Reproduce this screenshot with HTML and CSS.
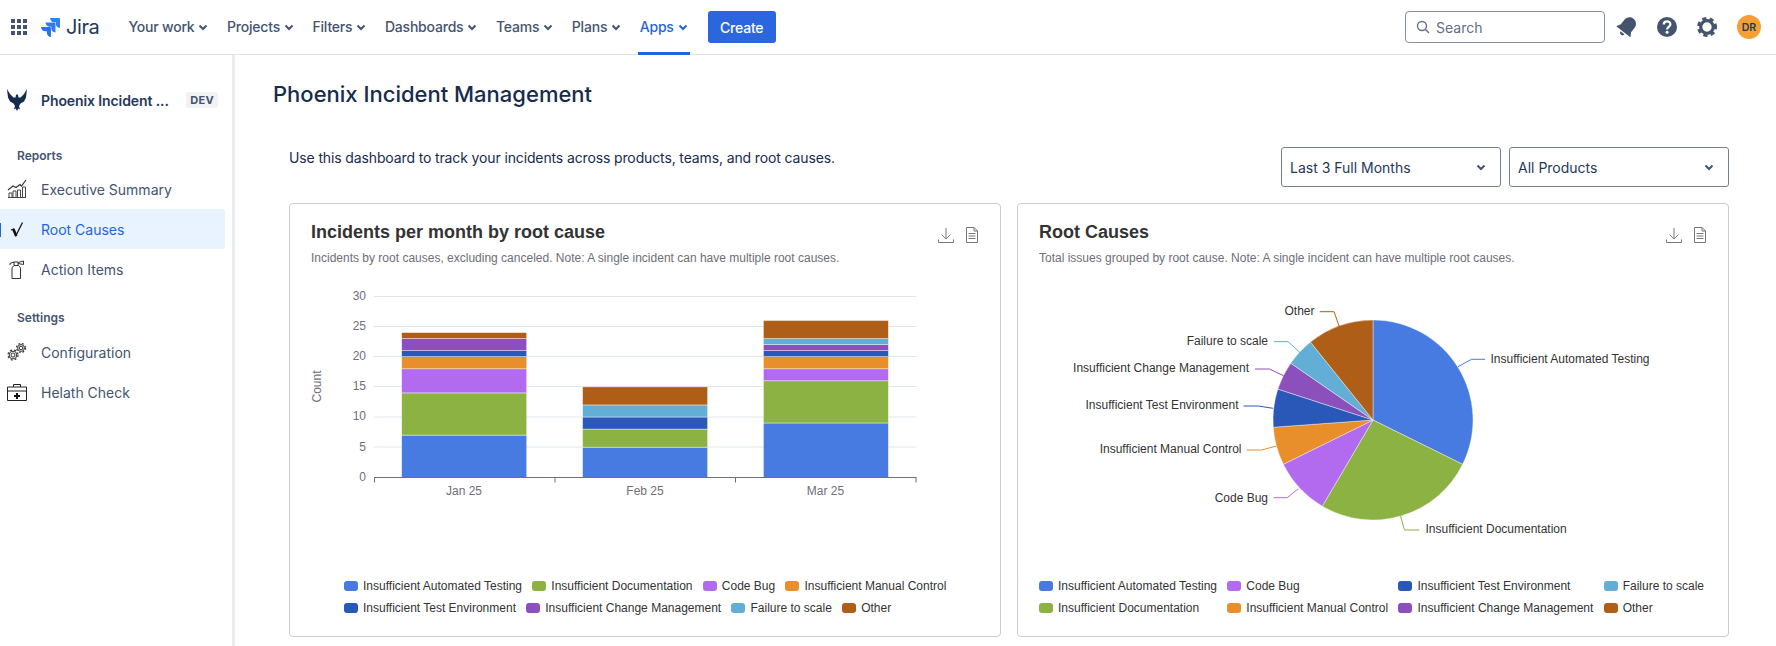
FILE: index.html
```html
<!DOCTYPE html>
<html lang="en">
<head>
<meta charset="utf-8">
<title>Phoenix Incident Management</title>
<link rel="stylesheet" href="styles.css">
</head>
<body>
<svg class="sprite" aria-hidden="true">
  <symbol id="chev" viewBox="0 0 10 10"><path d="M1.5 3.5 5 7l3.5-3.5" fill="none" stroke="currentColor" stroke-width="2"/></symbol>
  <symbol id="download" viewBox="0 0 16 16"><path d="M8 1v10.5M3.5 7.5 8 12l4.500-4.500M.5 12.500v3h15v-3" fill="none" stroke="#777" stroke-width="1"/></symbol>
  <symbol id="doc" viewBox="0 0 12 16"><path d="M.5.500h7.500l3.500 3.500v11.500h-11zM8 .5V4h3.500M2.500 6.500h7M2.500 9h7M2.500 11.500h7" fill="none" stroke="#777" stroke-width="1"/></symbol>
</svg>

<header class="topbar">
  <svg class="apps" viewBox="0 0 16 16"><path d="M0 0h4v4H0zM6 0h4v4H6zM12 0h4v4h-4zM0 6h4v4H0zM6 6h4v4H6zM12 6h4v4h-4zM0 12h4v4H0zM6 12h4v4H6zM12 12h4v4h-4z" fill="#44546F"/></svg>
  <div class="logo">
    <svg class="logo-mark" viewBox="0 0 24 24"><path fill="#2684FF" d="M23.013 0H11.455a5.215 5.215 0 0 0 5.215 5.215h2.129v2.057A5.215 5.215 0 0 0 24 12.483V1.005A1.001 1.001 0 0 0 23.013 0Z"/><path fill="#2F7CEE" d="M17.294 5.757H5.736a5.215 5.215 0 0 0 5.215 5.214h2.129v2.058a5.218 5.218 0 0 0 5.215 5.214V6.758a1.001 1.001 0 0 0-1.001-1.001z"/><path fill="#2A74E6" d="M11.571 11.513H0a5.218 5.218 0 0 0 5.232 5.215h2.13v2.057A5.215 5.215 0 0 0 12.575 24V12.518a1.005 1.005 0 0 0-1.005-1.005z"/></svg>
    <span class="logo-text">Jira</span>
  </div>
  <nav class="topnav">
    <a class="topnav-link">Your work<svg class="chev"><use href="#chev"/></svg></a>
    <a class="topnav-link">Projects<svg class="chev"><use href="#chev"/></svg></a>
    <a class="topnav-link">Filters<svg class="chev"><use href="#chev"/></svg></a>
    <a class="topnav-link">Dashboards<svg class="chev"><use href="#chev"/></svg></a>
    <a class="topnav-link">Teams<svg class="chev"><use href="#chev"/></svg></a>
    <a class="topnav-link">Plans<svg class="chev"><use href="#chev"/></svg></a>
    <a class="topnav-link is-active">Apps<svg class="chev"><use href="#chev"/></svg></a>
  </nav>
  <button class="create">Create</button>
  <div class="topbar-right">
    <div class="search">
      <svg class="search-icon" viewBox="0 0 14 14"><circle cx="6" cy="6" r="4.500" fill="none" stroke="#626F86" stroke-width="1.400"/><path d="m9.500 9.500 3.500 3.500" stroke="#626F86" stroke-width="1.400"/></svg>
      <span>Search</span>
    </div>
    <svg class="tool bell" viewBox="0 0 24 24"><g transform="rotate(38 12 12)" fill="#44546F"><path d="M12 1.500c-3.900 0-6.500 2.900-6.500 6.700v5.500L3 18h18l-2.500-4.300V8.200c0-3.800-2.600-6.700-6.500-6.700z"/><path d="M9.500 19.300h5a2.500 2.500 0 0 1-5 0z"/></g></svg>
    <svg class="tool" viewBox="0 0 24 24"><circle cx="12" cy="12" r="10" fill="#44546F"/><path d="M8.800 9.500c0-4.300 6.600-4.200 6.600-.2 0 2.600-3.300 2.500-3.300 5.100" fill="none" stroke="#fff" stroke-width="2.300"/><circle cx="12.100" cy="17.300" r="1.500" fill="#fff"/></svg>
    <svg class="tool" viewBox="0 0 24 24"><circle cx="12" cy="12" r="6.300" fill="none" stroke="#44546F" stroke-width="3.200"/><circle cx="12" cy="12" r="8.600" fill="none" stroke="#44546F" stroke-width="2.800" stroke-dasharray="4.200 3.300" stroke-dashoffset="2.100"/></svg>
    <div class="avatar">DR</div>
  </div>
</header>

<div class="layout">
  <aside class="sidebar">
    <div class="brand">
      <svg class="side-icon" viewBox="0 0 20 22"><path d="M10 22 8.600 19.500 7 20.500l1-3.500-1.500-2.500L3 12.500 1 8.500 0 0l3 5 3.500 3.500h2l.4-2.200L10 5l1.100 1.300.4 2.200h2L17 5l3-5-1 8.500-2 4-3.500 2L12 17l1 3.500-1.600-1z" fill="#172B4D"/></svg>
      <span class="brand-name">Phoenix Incident ...</span>
      <span class="badge">DEV</span>
    </div>
    <div class="side-label side-label-first">Reports</div>
    <a class="side-item">
      <svg class="side-icon" viewBox="0 0 20 20"><path d="M1 18.500h18M2 18v-4h3v4M6 18v-6h3v6M10.500 18V11h3v7M15.500 18V8h3v10" fill="none" stroke="#444" stroke-width="1"/><path d="M1 11l5-4 3 1.500 4-3 1.500 1.500L19 1" fill="none" stroke="#333" stroke-width="1.200"/></svg>
      Executive Summary
    </a>
    <a class="side-item is-active">
      <svg class="side-icon" viewBox="0 0 20 20"><path d="M4 11l2.500-1 2.500 6.500L15.500 3.500" fill="none" stroke="#111" stroke-width="1.300"/><path d="M6.300 10l2.900 7" stroke="#111" stroke-width="2.600"/></svg>
      Root Causes
    </a>
    <a class="side-item">
      <svg class="side-icon" viewBox="0 0 20 20"><path d="M5 19.500h8.500V10c0-2-1.500-3-2-3.500h-4.500C6.500 7 5 8 5 10z" fill="none" stroke="#333" stroke-width="1"/><path d="M7 6.500V3h4v3.500M7 3 3 4.500M11 3.500l5.500-1.500v3.500L11 4.500M3 4.500V6" fill="none" stroke="#333" stroke-width="1"/></svg>
      Action Items
    </a>
    <div class="side-label">Settings</div>
    <a class="side-item">
      <svg class="side-icon" viewBox="0 0 20 20"><g fill="none" stroke="#333"><circle cx="6" cy="13" r="2" stroke-width="1"/><circle cx="6" cy="13" r="3.800" stroke-width="1"/><circle cx="6" cy="13" r="5" stroke-width="1.200" stroke-dasharray="2 2"/><circle cx="14" cy="6" r="1.800" stroke-width="1"/><circle cx="14" cy="6" r="3.400" stroke-width="1"/><circle cx="14" cy="6" r="4.500" stroke-width="1.200" stroke-dasharray="1.800 1.800"/></g></svg>
      Configuration
    </a>
    <a class="side-item">
      <svg class="side-icon" viewBox="0 0 20 20"><path d="M.5 5h19v13.500H.5zM.5 9h19M6.500 5V2.500h7V5" fill="none" stroke="#222" stroke-width="1"/><path d="M9 11h2v2h2v2h-2v2H9v-2H7v-2h2z" fill="#111"/></svg>
      Helath Check
    </a>
  </aside>

  <main class="main">
    <h1 class="title">Phoenix Incident Management</h1>
    <div class="content">
      <div class="toolbar">
        <p class="intro">Use this dashboard to track your incidents across products, teams, and root causes.</p>
        <div class="filters">
          <div class="select">Last 3 Full Months<svg class="select-chev"><use href="#chev"/></svg></div>
          <div class="select">All Products<svg class="select-chev"><use href="#chev"/></svg></div>
        </div>
      </div>

      <div class="cards">
        <section class="card">
          <div class="card-head">
            <div>
              <h2 class="card-title">Incidents per month by root cause</h2>
              <p class="card-sub">Incidents by root causes, excluding canceled. Note: A single incident can have multiple root causes.</p>
            </div>
            <div class="card-tools">
              <svg class="tool-dl"><use href="#download"/></svg>
              <svg class="tool-doc"><use href="#doc"/></svg>
            </div>
          </div>
          <svg class="chart" viewBox="290 266 710 300">
            <g class="grid">
              <path d="M374 296.500h542.500M374 326.500h542.500M374 356.500h542.500M374 386.500h542.500M374 417h542.500M374 447h542.500"/>
            </g>
            <g class="axis-text">
              <text x="366" y="299.500" text-anchor="end">30</text>
              <text x="366" y="329.500" text-anchor="end">25</text>
              <text x="366" y="360" text-anchor="end">20</text>
              <text x="366" y="390" text-anchor="end">15</text>
              <text x="366" y="420" text-anchor="end">10</text>
              <text x="366" y="450.500" text-anchor="end">5</text>
              <text x="366" y="481" text-anchor="end">0</text>
              <text x="464" y="495" text-anchor="middle">Jan 25</text>
              <text x="645" y="495" text-anchor="middle">Feb 25</text>
              <text x="825.500" y="495" text-anchor="middle">Mar 25</text>
              <text x="0" y="0" text-anchor="middle" transform="translate(321 386.500) rotate(-90)">Count</text>
            </g>
            <g class="seg">
              <rect class="c1" x="401.700" y="435.100" width="125" height="42.200"/>
              <rect class="c2" x="401.700" y="392.900" width="125" height="42.200"/>
              <rect class="c3" x="401.700" y="368.800" width="125" height="24.100"/>
              <rect class="c4" x="401.700" y="356.700" width="125" height="12.100"/>
              <rect class="c5" x="401.700" y="350.700" width="125" height="6"/>
              <rect class="c6" x="401.700" y="338.600" width="125" height="12.100"/>
              <rect class="c8" x="401.700" y="332.600" width="125" height="6"/>

              <rect class="c1" x="582.600" y="447.150" width="125" height="30.150"/>
              <rect class="c2" x="582.600" y="429.060" width="125" height="18.090"/>
              <rect class="c5" x="582.600" y="417" width="125" height="12.060"/>
              <rect class="c7" x="582.600" y="404.940" width="125" height="12.060"/>
              <rect class="c8" x="582.600" y="386.850" width="125" height="18.090"/>

              <rect class="c1" x="763.400" y="423" width="125" height="54.300"/>
              <rect class="c2" x="763.400" y="380.800" width="125" height="42.200"/>
              <rect class="c3" x="763.400" y="368.800" width="125" height="12"/>
              <rect class="c4" x="763.400" y="356.700" width="125" height="12.100"/>
              <rect class="c5" x="763.400" y="350.700" width="125" height="6"/>
              <rect class="c6" x="763.400" y="344.700" width="125" height="6"/>
              <rect class="c7" x="763.400" y="338.600" width="125" height="6.100"/>
              <rect class="c8" x="763.400" y="320.500" width="125" height="18.100"/>
            </g>
            <path class="axis-line" d="M374 477.500h542.500M374.500 477.500v5M555 477.500v5M735.500 477.500v5M916 477.500v5"/>
          </svg>
          <div class="legend legend-flow">
            <span class="legend-item"><i class="swatch b1"></i>Insufficient Automated Testing</span>
            <span class="legend-item"><i class="swatch b2"></i>Insufficient Documentation</span>
            <span class="legend-item"><i class="swatch b3"></i>Code Bug</span>
            <span class="legend-item"><i class="swatch b4"></i>Insufficient Manual Control</span>
            <span class="legend-item"><i class="swatch b5"></i>Insufficient Test Environment</span>
            <span class="legend-item"><i class="swatch b6"></i>Insufficient Change Management</span>
            <span class="legend-item"><i class="swatch b7"></i>Failure to scale</span>
            <span class="legend-item"><i class="swatch b8"></i>Other</span>
          </div>
        </section>

        <section class="card">
          <div class="card-head">
            <div>
              <h2 class="card-title">Root Causes</h2>
              <p class="card-sub">Total issues grouped by root cause. Note: A single incident can have multiple root causes.</p>
            </div>
            <div class="card-tools">
              <svg class="tool-dl"><use href="#download"/></svg>
              <svg class="tool-doc"><use href="#doc"/></svg>
            </div>
          </div>
          <svg class="chart" viewBox="1019 266 709 300">
            <g class="pie" transform="translate(1373.500 420)">
              <path class="c1" d="M0 0V-100A100 100 0 0 1 89.640 44.320Z"/>
              <path class="c2" d="M0 0L89.640 44.320A100 100 0 0 1 -50.690 86.200Z"/>
              <path class="c3" d="M0 0L-50.690 86.200A100 100 0 0 1 -89.640 44.320Z"/>
              <path class="c4" d="M0 0L-89.640 44.320A100 100 0 0 1 -99.740 7.240Z"/>
              <path class="c5" d="M0 0L-99.740 7.240A100 100 0 0 1 -95.110 -30.900Z"/>
              <path class="c6" d="M0 0L-95.110 -30.900A100 100 0 0 1 -82.300 -56.810Z"/>
              <path class="c7" d="M0 0L-82.300 -56.810A100 100 0 0 1 -62.600 -77.980Z"/>
              <path class="c8" d="M0 0L-62.600 -77.980A100 100 0 0 1 0 -100Z"/>
            </g>
            <g class="leaders">
              <path class="l1" d="M1458.500 366.700 1472 359.300H1485.600"/>
              <path class="l2" d="M1401 516 1405 530H1420"/>
              <path class="l3" d="M1298.700 488.700 1287.700 497.700H1274"/>
              <path class="l4" d="M1277 446 1262 450H1247"/>
              <path class="l5" d="M1273.400 408.300 1258.800 406H1244"/>
              <path class="l6" d="M1284 375.700 1270 369H1255.500"/>
              <path class="l7" d="M1300.500 352.700 1288.600 341.700H1274.400"/>
              <path class="l8" d="M1339.600 326 1334.500 311.700H1320.300"/>
            </g>
            <g class="pie-text">
              <text x="1491" y="363">Insufficient Automated Testing</text>
              <text x="1426" y="533">Insufficient Documentation</text>
              <text x="1268.500" y="502" text-anchor="end">Code Bug</text>
              <text x="1242" y="453" text-anchor="end">Insufficient Manual Control</text>
              <text x="1239" y="409" text-anchor="end">Insufficient Test Environment</text>
              <text x="1249.500" y="372" text-anchor="end">Insufficient Change Management</text>
              <text x="1268.500" y="345" text-anchor="end">Failure to scale</text>
              <text x="1315" y="315" text-anchor="end">Other</text>
            </g>
          </svg>
          <div class="legend legend-grid">
            <span class="legend-item"><i class="swatch b1"></i>Insufficient Automated Testing</span>
            <span class="legend-item"><i class="swatch b3"></i>Code Bug</span>
            <span class="legend-item"><i class="swatch b5"></i>Insufficient Test Environment</span>
            <span class="legend-item"><i class="swatch b7"></i>Failure to scale</span>
            <span class="legend-item"><i class="swatch b2"></i>Insufficient Documentation</span>
            <span class="legend-item"><i class="swatch b4"></i>Insufficient Manual Control</span>
            <span class="legend-item"><i class="swatch b6"></i>Insufficient Change Management</span>
            <span class="legend-item"><i class="swatch b8"></i>Other</span>
          </div>
        </section>
      </div>
    </div>
  </main>
</div>
</body>
</html>
```

FILE: styles.css
```css
* { box-sizing: border-box; }

html, body { height: 100%; }

body {
  margin: 0;
  background: #fff;
  color: #172B4D;
  font-family: Inter, "Noto Sans", "Liberation Sans", sans-serif;
  font-size: 14px;
  overflow: hidden;
}

.sprite { display: none; }

/* Top bar */
.topbar {
  display: flex;
  align-items: center;
  height: 55px;
  padding: 0 15px 0 11px;
  border-bottom: 1px solid #E2E3E6;
}

.apps { width: 16px; height: 16px; flex: none; }

.logo {
  display: flex;
  align-items: center;
  gap: 6px;
  margin-left: 14px;
}

.logo-mark { width: 19px; height: 19px; }

.logo-text {
  font-size: 20px;
  font-weight: 400;
  color: #253858;
  letter-spacing: -0.4px;
}

.topnav {
  display: flex;
  align-self: stretch;
  gap: 14.500px;
  margin-left: 27px;
}

.topnav-link {
  display: flex;
  align-items: center;
  gap: 4px;
  padding: 1px 2px 0;
  color: #44546F;
  font-weight: 500;
  font-size: 14px;
  letter-spacing: -0.2px;
  border-bottom: 3px solid transparent;
  margin-bottom: -1px;
}

.topnav-link.is-active {
  color: #1F64E0;
  border-bottom-color: #1F64E0;
}

.chev { width: 10px; height: 10px; }

.create {
  height: 32px;
  width: 68px;
  margin-left: 18px;
  border: 0;
  border-radius: 3px;
  background: #2C66DE;
  color: #fff;
  font: 500 14px Inter, sans-serif;
  letter-spacing: -0.2px;
}

.topbar-right {
  display: flex;
  align-items: center;
  gap: 16px;
  margin-left: auto;
}

.search {
  display: flex;
  align-items: center;
  gap: 6px;
  width: 200px;
  height: 32px;
  margin-right: -6px;
  padding-left: 10px;
  border: 1px solid #8590A2;
  border-radius: 4px;
  color: #626F86;
  font-size: 14px;
}

.search-icon { width: 14px; height: 14px; }

.tool { width: 24px; height: 24px; flex: none; }

.avatar {
  display: flex;
  align-items: center;
  justify-content: center;
  width: 24px;
  height: 24px;
  margin-left: 2px;
  border-radius: 50%;
  background: #F5A034;
  color: #253858;
  font-size: 10.500px;
  font-weight: 600;
}

/* Frame */
.layout {
  display: flex;
  height: calc(100vh - 55px);
}

.sidebar {
  flex: none;
  width: 235px;
  padding-right: 7px;
  border-right: 3px solid #EBECF0;
}

.brand {
  display: flex;
  align-items: center;
  height: 32px;
  margin-top: 29px;
  padding-left: 7px;
}

.side-icon { width: 20px; height: 20px; flex: none; }

.brand .side-icon { height: 22px; }

.brand-name {
  margin-left: 14px;
  font-weight: 600;
  font-size: 14px;
  letter-spacing: -0.1px;
  color: #253858;
  white-space: nowrap;
}

.badge {
  margin-left: auto;
  margin-right: 7px;
  padding: 0 4px;
  height: 16px;
  line-height: 16px;
  border-radius: 3px;
  background: #F1F2F4;
  color: #44546F;
  font-size: 11px;
  font-weight: 700;
  letter-spacing: 0.3px;
}

.side-label {
  height: 16px;
  line-height: 16px;
  margin: 21px 0 6px 17px;
  color: #44546F;
  font-size: 12px;
  font-weight: 600;
}

.side-label-first { margin-top: 32px; margin-bottom: 5px; }

.side-item {
  display: flex;
  align-items: center;
  gap: 14px;
  height: 40px;
  padding-left: 7px;
  color: #44546F;
  font-size: 14px;
  border-radius: 0 3px 3px 0;
}

.side-item.is-active {
  position: relative;
  background: #E9F2FF;
  color: #1F64E0;
}

.side-item.is-active::before {
  content: "";
  position: absolute;
  left: 0;
  top: 14px;
  width: 1px;
  height: 14px;
  background: #1F64E0;
}

/* Main */
.main {
  flex: 1;
  min-width: 0;
  padding: 0 47px 0 38px;
}

.title {
  margin: 25px 0 0;
  font-size: 22px;
  line-height: 28px;
  font-weight: 500;
  color: #172B4D;
}

.content { padding-left: 16px; }

.toolbar {
  display: flex;
  justify-content: space-between;
  height: 40px;
  margin-top: 39px;
  margin-bottom: 16px;
}

.intro {
  margin: 0;
  font-size: 14px;
  line-height: 21px;
  letter-spacing: -0.130px;
  color: #172B4D;
}

.filters { display: flex; gap: 8px; }

.select {
  display: flex;
  align-items: center;
  justify-content: space-between;
  width: 220px;
  height: 40px;
  padding: 0 14px 0 8px;
  border: 1px solid #758195;
  border-radius: 3px;
  color: #253858;
  font-size: 14px;
}

.select-chev { width: 10px; height: 10px; color: #44546F; }

.cards {
  display: grid;
  grid-template-columns: 1fr 1fr;
  gap: 16px;
}

.card {
  height: 434px;
  border: 1px solid #CCCCCC;
  border-radius: 4px;
}

.card-head {
  display: flex;
  justify-content: space-between;
  padding: 17px 22px 0 21px;
}

.card-title {
  margin: 0;
  font: 700 18px/22px "Liberation Sans", Arial, sans-serif;
  color: #333333;
}

.card-sub {
  margin: 7px 0 0;
  font: 400 12px/16px "Liberation Sans", Arial, sans-serif;
  color: #6E6E76;
}

.card-tools {
  display: flex;
  gap: 12px;
  padding-top: 6px;
}

.tool-dl { width: 16px; height: 16px; }

.tool-doc { width: 12px; height: 16px; }

.chart {
  display: block;
  width: 100%;
  height: 300px;
}

.chart text {
  font: 12px "Liberation Sans", Arial, sans-serif;
}

.grid path { fill: none; stroke: #E0E6F1; stroke-width: 1; }

.axis-line { fill: none; stroke: #6E7079; stroke-width: 1; }

.axis-text { fill: #6E7079; }

.seg rect { stroke: #fff; stroke-width: 0.600; stroke-opacity: 0.700; }

.pie path { stroke: #fff; stroke-width: 0.400; }

.pie-text { fill: #333; }

.leaders path { fill: none; stroke-width: 1; }

.c1 { fill: #477BE2; }
.c2 { fill: #8DB244; }
.c3 { fill: #B26AEE; }
.c4 { fill: #E88F2B; }
.c5 { fill: #2A58B8; }
.c6 { fill: #8B50BC; }
.c7 { fill: #62AED6; }
.c8 { fill: #AF5E18; }

.l1 { stroke: #477BE2; }
.l2 { stroke: #8DB244; }
.l3 { stroke: #B26AEE; }
.l4 { stroke: #E88F2B; }
.l5 { stroke: #2A58B8; }
.l6 { stroke: #8B50BC; }
.l7 { stroke: #62AED6; }
.l8 { stroke: #AF5E18; }

.b1 { background: #477BE2; }
.b2 { background: #8DB244; }
.b3 { background: #B26AEE; }
.b4 { background: #E88F2B; }
.b5 { background: #2A58B8; }
.b6 { background: #8B50BC; }
.b7 { background: #62AED6; }
.b8 { background: #AF5E18; }

.legend {
  font: 12px/14px "Liberation Sans", Arial, sans-serif;
  color: #333;
  margin-top: 13px;
}

.legend-flow {
  display: flex;
  flex-wrap: wrap;
  gap: 8px 10.300px;
  width: 612px;
  margin-left: 54px;
}

.legend-grid {
  display: grid;
  grid-template-columns: auto auto auto auto;
  justify-content: start;
  gap: 8px 10.300px;
  margin-left: 21px;
}

.legend-item {
  display: flex;
  align-items: center;
  gap: 5px;
  white-space: nowrap;
}

.swatch {
  flex: none;
  width: 14px;
  height: 10px;
  border-radius: 3px;
}
```
